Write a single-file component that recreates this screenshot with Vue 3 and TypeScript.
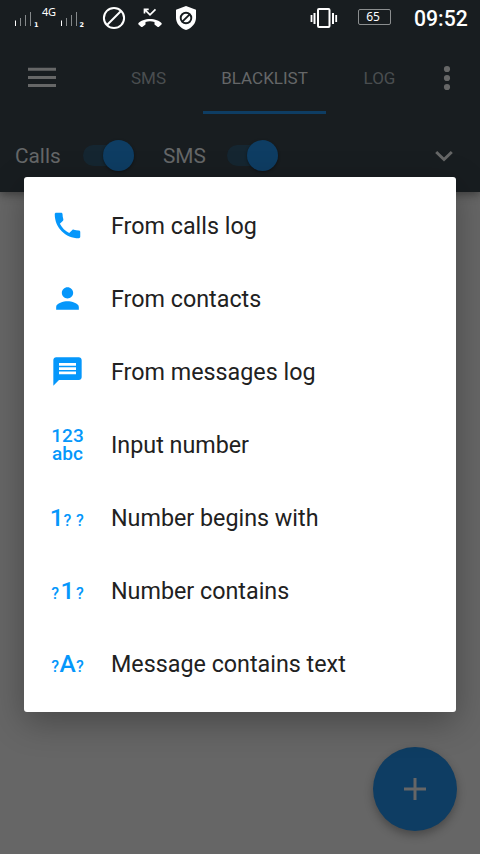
<script setup lang="ts">
type IconKind = 'phone' | 'person' | 'message' | 'input' | 'begins' | 'contains' | 'text'

interface MenuItem {
  icon: IconKind
  label: string
}

const items: MenuItem[] = [
  { icon: 'phone', label: 'From calls log' },
  { icon: 'person', label: 'From contacts' },
  { icon: 'message', label: 'From messages log' },
  { icon: 'input', label: 'Input number' },
  { icon: 'begins', label: 'Number begins with' },
  { icon: 'contains', label: 'Number contains' },
  { icon: 'text', label: 'Message contains text' },
]
</script>

<template>
  <div class="screen">
    <header class="appbar">
      <div class="status">
        <svg class="status-left" width="210" height="38" viewBox="0 0 210 38">
          <g stroke-width="1" stroke="#85898b">
            <path d="M20.500 18v8M25.500 15v11M30.500 12v14M66.500 18v8M71.500 15v11M76.500 12v14" />
            <path d="M15.500 20.500v5.500M61.500 20.500v5.500" stroke="#fff" />
          </g>
          <text x="34" y="27" class="tiny">1</text>
          <text x="79.600" y="27" class="tiny">2</text>
          <text x="42" y="16" class="net" textLength="14">4G</text>
          <g fill="none" stroke="#fff" stroke-width="2">
            <circle cx="114" cy="18" r="10.100" />
            <path d="M107 25L121 11" />
          </g>
          <path d="M150 19c-5 0-9.500 1.700-11.500 4-.4.500-.3 1 0 1.400l2.500 2.300c.5.500 1.100.5 1.600.1l2.300-1.700c.4-.3.600-.7.600-1.200v-2c3-.9 6-.9 9 0v2c0 .5.200.9.600 1.200l2.300 1.700c.5.400 1.100.400 1.600-.1l2.500-2.300c.3-.4.400-.9 0-1.400-2-2.300-6.500-4-11.500-4z" fill="#fff" />
          <path d="M144.500 13.500V9.300h4.200M145 9.800l5 5 5.500-5.500" fill="none" stroke="#fff" stroke-width="1.700" />
          <path d="M186 6l10 3.800v8c0 5.700-4.300 10.500-10 12.200-5.700-1.700-10-6.500-10-12.200v-8z" fill="#fff" />
          <g fill="none" stroke="#181d20" stroke-width="1.900">
            <circle cx="186" cy="18" r="5.300" />
            <path d="M182.300 21.700L189.700 14.300" />
          </g>
        </svg>
        <div class="status-right">
          <svg class="vibrate" width="28" height="22" viewBox="0 0 28 22" fill="none" stroke="#fff">
            <rect x="8" y="2" width="11.500" height="18" rx="1" stroke-width="2" />
            <path d="M4.500 6v11M23 6v11" stroke-width="2" />
            <path d="M1.500 8v7M26.200 8v7" stroke-width="1.800" />
          </svg>
          <span class="battery">65</span>
          <span class="clock">09:52</span>
        </div>
      </div>

      <nav class="toolbar">
        <svg class="burger" width="28" height="22" viewBox="0 0 28 22" fill="#666767">
          <path d="M0 .8h28v3H0zM0 8.900h28v3H0zM0 17h28v3H0z" />
        </svg>
        <span class="tab tab-sms"><span>SMS</span></span>
        <span class="tab tab-active"><span>BLACKLIST</span></span>
        <span class="tab tab-log"><span>LOG</span></span>
        <svg class="dots" width="8" height="26" viewBox="0 0 8 26" fill="#666767">
          <circle cx="4" cy="4" r="3.100" />
          <circle cx="4" cy="13" r="3.100" />
          <circle cx="4" cy="22" r="3.100" />
        </svg>
      </nav>

      <div class="filters">
        <span class="filter-label calls">Calls</span>
        <span class="switch"><i class="thumb"></i></span>
        <span class="filter-label sms">SMS</span>
        <span class="switch"><i class="thumb"></i></span>
        <svg class="chevron" width="20" height="14" viewBox="0 0 20 14" fill="none" stroke="#666767" stroke-width="2.900">
          <path d="M2.200 3L10 10.600 17.800 3" />
        </svg>
      </div>
    </header>

    <div class="fab">
      <svg width="22" height="22" viewBox="0 0 22 22" stroke="#666" stroke-width="3">
        <path d="M11 0v22M0 11h22" />
      </svg>
    </div>

    <div class="dialog" role="menu">
      <div v-for="item in items" :key="item.label" class="item" role="menuitem">
        <span class="icon">
          <svg v-if="item.icon === 'phone'" width="35" height="35" viewBox="-0.35 -0.35 24.7 24.7" fill="#0597fb">
            <path d="M6.620 10.790c1.440 2.830 3.760 5.140 6.590 6.590l2.200-2.200c.27-.27.67-.36 1.020-.24 1.120.37 2.330.57 3.570.57.55 0 1 .45 1 1V20c0 .55-.45 1-1 1-9.390 0-17-7.610-17-17 0-.55.45-1 1-1h3.500c.55 0 1 .45 1 1 0 1.250.2 2.450.57 3.570.11.35.03.74-.25 1.020l-2.200 2.200z" />
          </svg>
          <svg v-else-if="item.icon === 'person'" width="35" height="35" viewBox="-0.35 -0.35 24.7 24.7" fill="#0597fb">
            <path d="M12 12c2.210 0 4-1.790 4-4s-1.790-4-4-4-4 1.790-4 4 1.790 4 4 4zm0 2c-2.670 0-8 1.340-8 4v2h16v-2c0-2.660-5.330-4-8-4z" />
          </svg>
          <svg v-else-if="item.icon === 'message'" width="35" height="35" viewBox="-0.35 -0.35 24.7 24.7" fill="#0597fb">
            <path d="M20 2H4c-1.100 0-1.990.9-1.990 2L2 22l4-4h14c1.100 0 2-.9 2-2V4c0-1.100-.9-2-2-2zm-2 12H6v-2h12v2zm0-3H6V9h12v2zm0-3H6V6h12v2z" />
          </svg>
          <span v-else-if="item.icon === 'input'" class="stack">123<br />abc</span>
          <span v-else-if="item.icon === 'begins'" class="glyphs"><b class="lead">1</b><small>?</small><small>?</small></span>
          <span v-else-if="item.icon === 'contains'" class="glyphs"><small>?</small><b>1</b><small>?</small></span>
          <span v-else class="glyphs"><small>?</small><b>A</b><small>?</small></span>
        </span>
        <span class="label">{{ item.label }}</span>
      </div>
    </div>
  </div>
</template>

<style>
body {
  margin: 0;
  overflow: hidden;
}
</style>

<style scoped>
.screen {
  position: relative;
  width: 480px;
  height: 854px;
  overflow: hidden;
  background: #666;
  font-family: Roboto, "Liberation Sans", sans-serif;
}
.appbar {
  display: flex;
  flex-direction: column;
  height: 192px;
  background: #181d20;
  box-shadow: 0 3px 8px rgba(0, 0, 0, 0.35);
}
.status {
  display: flex;
  justify-content: space-between;
  height: 41px;
}
.status-left {
  flex: none;
}
.tiny {
  font: 700 6.500px "DejaVu Sans", sans-serif;
  fill: #fff;
}
.net {
  font: 11px "Noto Sans", sans-serif;
  fill: #fff;
}
.status-right {
  display: flex;
  align-items: center;
  height: 37px;
  padding-right: 12px;
  color: #fff;
}
.vibrate {
  margin-bottom: 1px;
}
.battery {
  box-sizing: border-box;
  width: 33px;
  height: 16px;
  margin: 0 23px 4px 20px;
  padding-right: 3px;
  border: 1px solid #8b8e8f;
  border-radius: 2px;
  font: 12px/14px "Noto Sans", sans-serif;
  text-align: center;
}
.clock {
  width: 54px;
  font-size: 21.200px;
  font-weight: 500;
  white-space: nowrap;
}
.toolbar {
  display: flex;
  flex: none;
  align-items: center;
  height: 73px;
}
.burger {
  margin-left: 28px;
}
.tab {
  box-sizing: border-box;
  display: flex;
  align-items: center;
  justify-content: center;
  height: 73px;
  padding-top: 4px;
  border-bottom: 3px solid transparent;
  color: #4a4e50;
  font-size: 17px;
}
.tab-sms {
  width: 109px;
  margin-left: 38px;
}
.tab-active {
  width: 123px;
  border-color: #0e3d63;
  color: #656768;
}
.tab-log {
  width: 107px;
}
.dots {
  margin-left: 10px;
}
.filters {
  display: flex;
  flex: none;
  align-items: center;
  height: 72px;
  margin-top: 6px;
  padding: 0 26px 0 15px;
}
.filter-label {
  color: #656768;
  font-size: 20.800px;
}
.calls {
  width: 68px;
}
.sms {
  width: 64px;
  margin-left: 29px;
}
.switch {
  display: flex;
  align-items: center;
  justify-content: flex-end;
  width: 51px;
  height: 21px;
  margin-bottom: 1px;
  border-radius: 11px;
  background: #152631;
}
.thumb {
  flex: none;
  width: 31px;
  height: 31px;
  border-radius: 50%;
  background: #0e3d63;
  box-shadow: 0 1px 3px rgba(0, 0, 0, 0.4);
}
.chevron {
  margin-left: auto;
}
.fab {
  position: absolute;
  left: 373px;
  top: 747px;
  display: flex;
  align-items: center;
  justify-content: center;
  width: 84px;
  height: 84px;
  border-radius: 50%;
  background: #0e3d63;
  box-shadow: 0 4px 10px rgba(0, 0, 0, 0.3);
}
.dialog {
  position: absolute;
  left: 24px;
  top: 177px;
  box-sizing: border-box;
  width: 432px;
  height: 535px;
  padding: 12px 0;
  border-radius: 3px;
  background: #fff;
  box-shadow: 0 10px 34px rgba(0, 0, 0, 0.3);
}
.item {
  display: flex;
  align-items: center;
  height: 73px;
}
.icon {
  display: flex;
  align-items: center;
  justify-content: center;
  width: 36px;
  margin-left: 25.500px;
  margin-right: 25.500px;
  color: #0597fb;
}
.icon svg {
  display: block;
}
.label {
  padding-top: 1px;
  color: #212121;
  font-size: 23.300px;
  white-space: nowrap;
}
.stack {
  padding-top: 1px;
  font-size: 19px;
  font-weight: 500;
  line-height: 18.500px;
  text-align: center;
}
.glyphs {
  display: grid;
  grid-template-columns: repeat(3, 12.300px);
  align-items: baseline;
  justify-content: center;
  justify-items: center;
  font-weight: 500;
}
.glyphs b {
  font-size: 24.500px;
  font-weight: 500;
}
.glyphs .lead {
  margin-left: 3px;
}
.glyphs small {
  font-size: 16px;
}
</style>
